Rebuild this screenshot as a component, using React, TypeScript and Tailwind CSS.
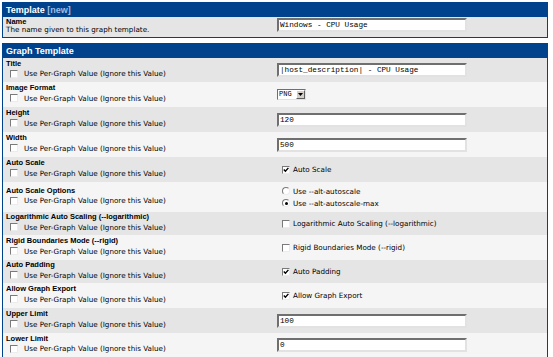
import React from 'react';

const REG = "font-['DejaVu_Sans',sans-serif] text-[7.2px] text-black";
const LBL = "font-['Liberation_Sans',sans-serif] font-bold text-[7.5px] text-black";
const MONO = "font-['Liberation_Mono',monospace] text-[7.7px] text-black";
const HDR = "font-['Liberation_Sans',sans-serif] font-bold text-[9px] text-white";

function Box({ checked }: { checked?: boolean }) {
  return (
    <span className="relative inline-block w-[8px] h-[8px] shrink-0 border border-t-[#7a7a7a] border-l-[#7a7a7a] border-b-[#ececec] border-r-[#ececec] bg-white">
      {checked && (
        <svg className="absolute left-0 top-0" width="6" height="6" viewBox="0 0 6 6">
          <path d="M0.8 2.6 L2.4 4.3 L5.4 0.9" fill="none" stroke="#000" strokeWidth="1.4" />
        </svg>
      )}
    </span>
  );
}

function Radio({ checked }: { checked?: boolean }) {
  return (
    <span className="relative inline-flex items-center justify-center w-[8px] h-[8px] shrink-0 rounded-full border border-t-[#7a7a7a] border-l-[#7a7a7a] border-b-[#ececec] border-r-[#ececec] bg-white">
      {checked && <span className="block w-[3px] h-[3px] rounded-full bg-black" />}
    </span>
  );
}

function TextInput({ value }: { value: string }) {
  return (
    <div className="w-[190px] h-[14px] flex items-center bg-white border-2 border-t-[#6f6f6f] border-l-[#6f6f6f] border-b-[#e2e2e2] border-r-[#e2e2e2] pl-[1px]">
      <span className={`${MONO} leading-[10px] whitespace-pre`}>{value}</span>
    </div>
  );
}

function Select() {
  return (
    <div className="w-[29px] h-[11px] flex items-stretch bg-white border border-t-[#6f6f6f] border-l-[#6f6f6f] border-b-[#e2e2e2] border-r-[#e2e2e2]">
      <span className={`${MONO} flex-1 leading-[9px] pl-[1px] text-[7px]`}>PNG</span>
      <span className="w-[9px] flex items-center justify-center bg-[#d4d0c8] border border-t-white border-l-white border-b-[#606060] border-r-[#606060]">
        <svg width="5" height="3" viewBox="0 0 5 3">
          <path d="M0 0 H5 L2.5 3 Z" fill="#000" />
        </svg>
      </span>
    </div>
  );
}

function CheckItem({ checked, text }: { checked?: boolean; text: string }) {
  return (
    <div className="flex items-center pl-[5px] gap-[3px]">
      <Box checked={checked} />
      <span className={`${REG} leading-[9px]`}>{text}</span>
    </div>
  );
}

type Row = { label: string; h: number; right: React.ReactNode };

const rows: Row[] = [
  { label: 'Title', h: 24, right: <TextInput value="|host_description| - CPU Usage" /> },
  { label: 'Image Format', h: 25, right: <Select /> },
  { label: 'Height', h: 25, right: <TextInput value="120" /> },
  { label: 'Width', h: 25, right: <TextInput value="500" /> },
  { label: 'Auto Scale', h: 25, right: <CheckItem checked text="Auto Scale" /> },
  {
    label: 'Auto Scale Options',
    h: 30,
    right: (
      <div className="flex flex-col gap-[3px] pl-[5px]">
        <div className="flex items-center gap-[3px]">
          <Radio />
          <span className={`${REG} leading-[9px]`}>Use --alt-autoscale</span>
        </div>
        <div className="flex items-center gap-[3px]">
          <Radio checked />
          <span className={`${REG} leading-[9px]`}>Use --alt-autoscale-max</span>
        </div>
      </div>
    ),
  },
  { label: 'Logarithmic Auto Scaling (--logarithmic)', h: 23, right: <CheckItem text="Logarithmic Auto Scaling (--logarithmic)" /> },
  { label: 'Rigid Boundaries Mode (--rigid)', h: 25, right: <CheckItem text="Rigid Boundaries Mode (--rigid)" /> },
  { label: 'Auto Padding', h: 23, right: <CheckItem checked text="Auto Padding" /> },
  { label: 'Allow Graph Export', h: 25, right: <CheckItem checked text="Allow Graph Export" /> },
  { label: 'Upper Limit', h: 25, right: <TextInput value="100" /> },
  { label: 'Lower Limit', h: 24, right: <TextInput value="0" /> },
];

export default function App() {
  return (
    <div className="w-[553px] h-[357px] overflow-hidden bg-white pt-[2px] pl-[2px]">
      {/* Template table */}
      <div className="w-[546px] border-x border-b border-[#00438c]">
        <div className="h-[15px] bg-[#00438c] flex items-center pl-[3px]">
          <span className={`${HDR} leading-[10px]`}>
            Template <span className="text-[#9dbde6]">[new]</span>
          </span>
        </div>
        <div className="h-[20px] bg-[#e5e5e5] flex">
          <div className="w-[274px] pl-[3px] pt-[1px] flex flex-col">
            <span className={`${LBL} leading-[8px]`}>Name</span>
            <span className={`${REG} leading-[8px]`}>The name given to this graph template.</span>
          </div>
          <div className="flex-1 pt-[1px]">
            <TextInput value="Windows - CPU Usage" />
          </div>
        </div>
      </div>

      {/* Graph Template table */}
      <div className="w-[546px] mt-[5px] border-x border-[#00438c]">
        <div className="h-[15px] bg-[#00438c] flex items-center pl-[3px]">
          <span className={`${HDR} leading-[10px]`}>Graph Template</span>
        </div>
        {rows.map((r, i) => (
          <div
            key={r.label}
            className={`flex ${i % 2 === 0 ? 'bg-[#e5e5e5]' : 'bg-[#f5f5f5]'}`}
            style={{ height: r.h }}
          >
            <div className="w-[274px] pl-[3px] pb-[3px] flex flex-col justify-center">
              <span className={`${LBL} leading-[9px] whitespace-nowrap`}>{r.label}</span>
              <div className="mt-[1px] h-[10px] flex items-center pl-[4px] gap-[6px]">
                <Box />
                <span className={`${REG} leading-[9px] whitespace-nowrap`}>Use Per-Graph Value (Ignore this Value)</span>
              </div>
            </div>
            <div className="flex-1 flex items-center">{r.right}</div>
          </div>
        ))}
      </div>
    </div>
  );
}
